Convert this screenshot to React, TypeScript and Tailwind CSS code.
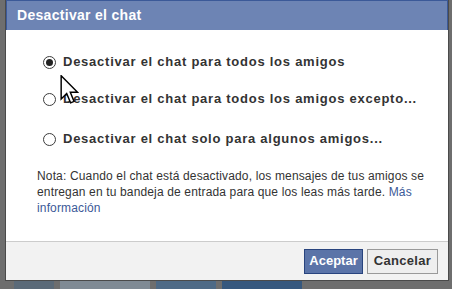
import React, { useState } from 'react';

const options = [
  'Desactivar el chat para todos los amigos',
  'Desactivar el chat para todos los amigos excepto...',
  'Desactivar el chat solo para algunos amigos...',
];

function Radio({ checked }: { checked: boolean }) {
  return (
    <span className="flex h-[13px] w-[13px] shrink-0 items-center justify-center rounded-full border border-[#3c3c3c] bg-white">
      {checked && <span className="h-[7px] w-[7px] rounded-full bg-[#222]" />}
    </span>
  );
}

function Cursor() {
  return (
    <svg
      className="pointer-events-none absolute left-[60px] top-[75px]"
      width="19"
      height="29"
      viewBox="0 0 12.5 20"
    >
      <path
        d="M0.5 0.5 L0.5 16.5 L4.3 12.8 L7 19.2 L9.4 18.2 L6.8 11.9 L11.8 11.9 Z"
        fill="#fff"
        stroke="#000"
        strokeWidth="1"
        strokeLinejoin="miter"
      />
    </svg>
  );
}

export default function App() {
  const [selected, setSelected] = useState(0);

  return (
    <div className="relative h-[289px] w-[452px] overflow-hidden bg-[#6e6e6e] font-['Liberation_Sans',Arial,sans-serif]">
      {/* Dialog */}
      <div className="ml-[5px] flex h-[281px] w-[444px] flex-col border-x border-b border-[#4a4a4a] bg-white">
        {/* Header */}
        <div className="flex h-[30px] items-center border-x border-t border-[#3b5998] bg-[#6d84b4] px-[10px]">
          <span className="text-[14px] font-bold tracking-[0.3px] text-white">Desactivar el chat</span>
        </div>

        {/* Body */}
        <div className="flex flex-1 flex-col pl-[31px] pr-[16px] pt-[25px]">
          <div className="flex flex-col pl-[6px]">
            {options.map((label, i) => (
              <label
                key={label}
                onClick={() => setSelected(i)}
                className={`flex h-[14px] cursor-default items-center gap-[7px] ${
                  i === 1 ? 'mt-[23px]' : i === 2 ? 'mt-[26px]' : ''
                }`}
              >
                <Radio checked={selected === i} />
                <span className="text-[13px] font-bold tracking-[0.75px] text-[#333]">{label}</span>
              </label>
            ))}
          </div>
          <p className="mt-[22px] text-[12px] leading-[16px] tracking-[0.15px] text-[#333]">
            Nota: Cuando el chat está desactivado, los mensajes de tus amigos se entregan en tu bandeja de
            entrada para que los leas más tarde.{' '}
            <a className="text-[#3b5998]">Más información</a>
          </p>
        </div>

        {/* Footer */}
        <div className="flex h-[39px] items-center justify-end gap-[4px] border-t border-[#ccc] bg-[#f2f2f2] pr-[10px]">
          <button className="h-[25px] w-[59px] border border-[#29447e] bg-[#5b74a8] text-[13px] font-bold text-white">
            Aceptar
          </button>
          <button className="h-[25px] w-[71px] border border-[#999] bg-[#eee] text-[13px] font-bold tracking-[0.3px] text-[#333]">
            Cancelar
          </button>
        </div>
      </div>

      {/* faint background content below the dialog */}
      <div className="flex h-[8px] gap-[6px] pl-[14px]">
        <div className="h-full w-[40px] bg-[#5b6a78]" />
        <div className="h-full w-[90px] bg-[#7f8a94]" />
        <div className="h-full w-[60px] bg-[#4e6a86]" />
        <div className="h-full w-[80px] bg-[#36587e]" />
      </div>

      <Cursor />
    </div>
  );
}
